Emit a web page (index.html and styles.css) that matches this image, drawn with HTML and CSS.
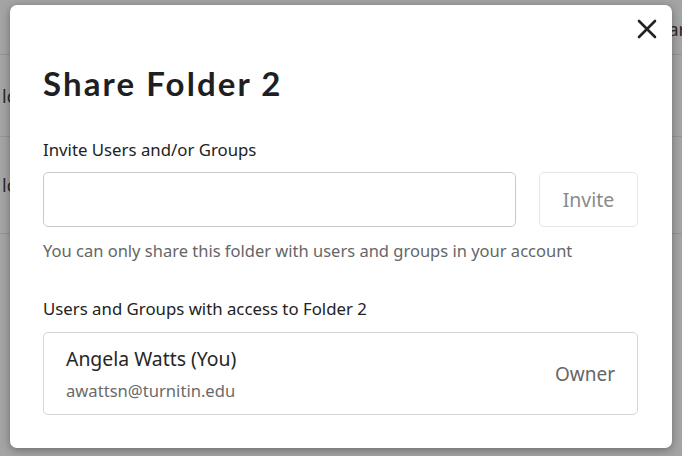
FILE: index.html
```html
<!DOCTYPE html>
<html lang="en">
<head>
<meta charset="UTF-8">
<meta name="viewport" content="width=device-width, initial-scale=1.0">
<title>Share Folder 2</title>
<link rel="stylesheet" href="styles.css">
</head>
<body>
<div class="page">
    <div class="page-row page-head"><span class="page-right">ar</span></div>
    <div class="page-row"><span class="page-left">ld</span></div>
    <div class="page-row"><span class="page-left">ld</span></div>
</div>

<div class="modal">
    <button class="close" aria-label="Close">
        <svg width="20" height="20" viewBox="0 0 20 20">
            <path d="M2 2 L18 18 M18 2 L2 18" stroke="#222" stroke-width="2.6" stroke-linecap="round"/>
        </svg>
    </button>
    <h2 class="title">Share Folder 2</h2>

    <label class="label" for="invite">Invite Users and/or Groups</label>
    <div class="invite-row">
        <input type="text" id="invite" class="invite-input">
        <button class="invite-btn" disabled>Invite</button>
    </div>
    <p class="hint">You can only share this folder with users and groups in your account</p>

    <div class="label label-access">Users and Groups with access to Folder 2</div>
    <div class="member">
        <div class="member-info">
            <div class="member-name">Angela Watts (You)</div>
            <div class="member-email">awattsn@turnitin.edu</div>
        </div>
        <div class="member-role">Owner</div>
    </div>
</div>
</body>
</html>
```

FILE: styles.css
```css
body {
    margin: 0;
    background-color: #a4a4a4;
    font-family: "Noto Sans", "Open Sans", sans-serif;
    color: #222;
    height: 456px;
    overflow: hidden;
}
.page-row {
    height: 81px;
    border-bottom: 1px solid #959595;
    display: flex;
    align-items: center;
    justify-content: space-between;
    font-size: 18px;
    color: #2a2a2a;
}
.page-row:last-child {
    height: 96px;
}
.page-head {
    height: 55px;
    align-items: flex-start;
    padding-top: 17px;
    box-sizing: border-box;
}
.page-left {
    margin-left: 2px;
}
.page-right {
    margin-left: auto;
    margin-right: -4px;
}
.modal {
    position: absolute;
    left: 10px;
    top: 5px;
    width: 662px;
    height: 443px;
    box-sizing: border-box;
    padding: 0 34px 0 33px;
    background-color: #fff;
    border-radius: 7px;
    box-shadow: 0 2px 8px rgba(0, 0, 0, 0.35);
}
.close {
    position: absolute;
    top: 14px;
    right: 15px;
    border: none;
    background: none;
    padding: 0;
    width: 20px;
    height: 20px;
    cursor: pointer;
}
.title {
    margin: 0;
    padding-top: 58px;
    font-family: "Lato", sans-serif;
    font-weight: 700;
    font-size: 33px;
    line-height: 40px;
    color: #1f1f1f;
    letter-spacing: 2.1px;
}
.label {
    display: block;
    margin-top: 35px;
    font-size: 16.8px;
    line-height: 24px;
    color: #222;
}
.label-access {
    margin-top: 34px;
}
.invite-row {
    display: flex;
    gap: 23px;
    margin-top: 10px;
}
.invite-input {
    flex: 1;
    height: 55px;
    box-sizing: border-box;
    border: 1px solid #c9c9c9;
    border-radius: 5px;
    padding: 0 14px;
    font-size: 16px;
    font-family: inherit;
}
.invite-btn {
    width: 99px;
    height: 55px;
    border: 1px solid #e6e6e6;
    border-radius: 5px;
    background-color: #fff;
    color: #8a8a8a;
    font-family: inherit;
    font-size: 19.5px;
}
.hint {
    margin: 12px 0 0;
    font-size: 16.5px;
    line-height: 24px;
    color: #666;
}
.label + .member {
    margin-top: 11px;
}
.member {
    display: flex;
    align-items: center;
    justify-content: space-between;
    height: 83px;
    box-sizing: border-box;
    border: 1px solid #d6d6d6;
    border-radius: 5px;
    padding: 0 22px;
}
.member-name {
    font-size: 19.4px;
    line-height: 26px;
    color: #262626;
}
.member-email {
    margin-top: 8px;
    font-size: 16.6px;
    line-height: 22px;
    color: #6a6a6a;
}
.member-role {
    font-size: 19px;
    color: #666;
}
```
